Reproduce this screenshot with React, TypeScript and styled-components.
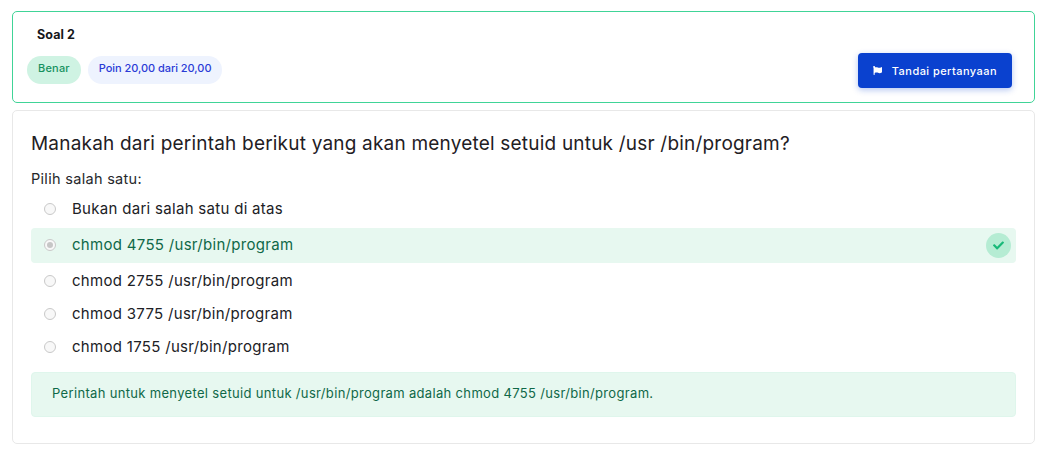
import React from 'react';
import styled, { createGlobalStyle } from 'styled-components';
import { FaCheck, FaFlag } from 'react-icons/fa';

const GlobalStyle = createGlobalStyle`
  html, body {
    margin: 0;
    padding: 0;
    background: #fff;
  }
  body {
    font-family: Inter, "Noto Sans", "Liberation Sans", sans-serif;
    color: #1c1d1f;
  }
`;

const Page = styled.div`
  display: flex;
  flex-direction: column;
  gap: 7px;
  width: 1023px;
  padding: 11px 14px 0 12px;
`;

const HeaderCard = styled.header`
  display: flex;
  justify-content: space-between;
  align-items: flex-end;
  height: 92px;
  box-sizing: border-box;
  padding: 14px 22px 14px 14px;
  border: 1px solid #40d497;
  border-radius: 5px;
`;

const HeaderInfo = styled.div`
  display: flex;
  flex-direction: column;
  gap: 12px;
`;

const QuestionNo = styled.h3`
  margin: 0 0 0 10px;
  font-size: 12.5px;
  line-height: 18px;
  font-weight: 700;
  letter-spacing: 0.1px;
  color: #16171a;
`;

const Badges = styled.div`
  display: flex;
  gap: 7px;
  margin-bottom: 4px;
`;

const Badge = styled.span<{ $tone: 'success' | 'info' }>`
  display: flex;
  align-items: center;
  height: 28px;
  padding: 0 11px 4px;
  box-sizing: border-box;
  border-radius: 14px;
  font-size: 11px;
  font-weight: 500;
  letter-spacing: ${(p) => (p.$tone === 'success' ? '0.2px' : '-0.05px')};
  color: ${(p) => (p.$tone === 'success' ? '#17925f' : '#2a3bd6')};
  background: ${(p) => (p.$tone === 'success' ? '#cff3e3' : '#eef3fe')};
`;

const FlagButton = styled.button`
  display: flex;
  align-items: center;
  gap: 10px;
  height: 35px;
  padding: 0 15px;
  border: none;
  border-radius: 4px;
  font-family: inherit;
  font-size: 11px;
  font-weight: 500;
  letter-spacing: 0.45px;
  color: #fff;
  background: #0a41cf;
  box-shadow: 0 2px 6px rgba(10, 65, 207, 0.3);
`;

const QuestionCard = styled.section`
  display: flex;
  flex-direction: column;
  height: 334px;
  box-sizing: border-box;
  padding: 20px 18px 0;
  border: 1px solid #e8e8e8;
  border-radius: 5px;
`;

const Prompt = styled.h2`
  margin: 0;
  font-size: 19px;
  line-height: 26px;
  font-weight: 400;
  letter-spacing: 0.2px;
  color: #1f2024;
`;

const ChooseLabel = styled.div`
  margin-top: 12px;
  font-size: 14.5px;
  line-height: 20px;
  letter-spacing: 0.3px;
  color: #26272b;
`;

const Options = styled.div`
  display: flex;
  flex-direction: column;
  margin-top: 4px;
`;

const Option = styled.div<{ $correct?: boolean }>`
  display: flex;
  align-items: center;
  gap: 16px;
  height: ${(p) => (p.$correct ? '35px' : '33px')};
  margin: ${(p) => (p.$correct ? '2px 0' : '0')};
  box-sizing: border-box;
  padding: 0 5px 1px 13px;
  border-radius: 4px;
  font-size: 15px;
  letter-spacing: 0.3px;
  color: ${(p) => (p.$correct ? '#0f6848' : '#202125')};
  background: ${(p) => (p.$correct ? '#e7f8f0' : 'transparent')};
`;

const Radio = styled.span<{ $checked?: boolean }>`
  display: flex;
  align-items: center;
  justify-content: center;
  flex: none;
  width: 12px;
  height: 12px;
  box-sizing: border-box;
  border: 1px solid #c9c9c9;
  border-radius: 50%;
  background: #f8f8f8;
  &::after {
    content: '';
    display: ${(p) => (p.$checked ? 'block' : 'none')};
    width: 6px;
    height: 6px;
    border-radius: 50%;
    background: #c6c6c6;
  }
`;

const OptionText = styled.span`
  flex: 1;
  padding-bottom: 2px;
`;

const CheckMark = styled.span`
  display: flex;
  align-items: center;
  justify-content: center;
  width: 25px;
  height: 25px;
  border-radius: 50%;
  font-size: 11px;
  color: #17b978;
  background: #b5ecd3;
`;

const Feedback = styled.div`
  display: flex;
  align-items: center;
  height: 45px;
  box-sizing: border-box;
  margin-top: 8px;
  padding: 0 20px 4px;
  border: 1px solid #dff6ec;
  border-radius: 4px;
  font-size: 13px;
  letter-spacing: 0.33px;
  color: #0f6848;
  background: #e7f8f0;
`;

const options = [
  { text: 'Bukan dari salah satu di atas' },
  { text: 'chmod 4755 /usr/bin/program', correct: true },
  { text: 'chmod 2755 /usr/bin/program' },
  { text: 'chmod 3775 /usr/bin/program' },
  { text: 'chmod 1755 /usr/bin/program' },
];

export default function App() {
  return (
    <>
      <GlobalStyle />
      <Page>
        <HeaderCard>
          <HeaderInfo>
            <QuestionNo>Soal 2</QuestionNo>
            <Badges>
              <Badge $tone="success">Benar</Badge>
              <Badge $tone="info">Poin 20,00 dari 20,00</Badge>
            </Badges>
          </HeaderInfo>
          <FlagButton>
            <FaFlag size={9} />
            Tandai pertanyaan
          </FlagButton>
        </HeaderCard>
        <QuestionCard>
          <Prompt>Manakah dari perintah berikut yang akan menyetel setuid untuk /usr /bin/program?</Prompt>
          <ChooseLabel>Pilih salah satu:</ChooseLabel>
          <Options>
            {options.map((o) => (
              <Option key={o.text} $correct={o.correct}>
                <Radio $checked={o.correct} />
                <OptionText>{o.text}</OptionText>
                {o.correct && (
                  <CheckMark>
                    <FaCheck />
                  </CheckMark>
                )}
              </Option>
            ))}
          </Options>
          <Feedback>
            Perintah untuk menyetel setuid untuk /usr/bin/program adalah chmod 4755 /usr/bin/program.
          </Feedback>
        </QuestionCard>
      </Page>
    </>
  );
}
